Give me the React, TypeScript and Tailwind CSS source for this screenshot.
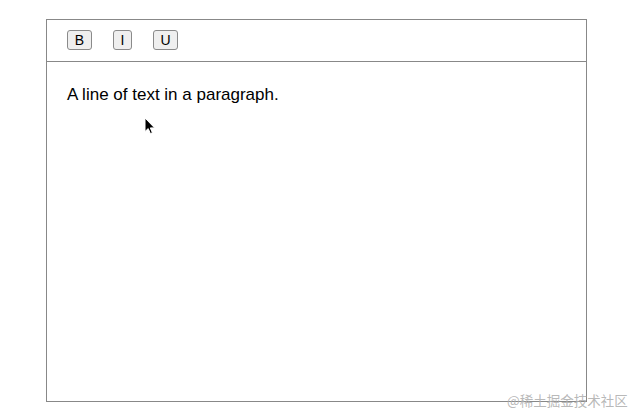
const BUTTONS = ["B", "I", "U"];

function Cursor() {
  return (
    <svg
      className="absolute left-[144px] top-[117px]"
      width="12"
      height="18"
      viewBox="0 0 12 18"
    >
      <path
        d="M1 1 L1 14.5 L4.2 11.6 L6.4 16.6 L8.4 15.7 L6.3 10.9 L10.6 10.9 Z"
        fill="#000"
        stroke="#fff"
        strokeWidth="1"
        strokeLinejoin="round"
      />
    </svg>
  );
}

export default function App() {
  return (
    <div
      className="relative h-[420px] w-[640px] bg-white pl-[46px] pt-[19px]"
      style={{ fontFamily: '"Liberation Sans", Arial, sans-serif' }}
    >
      <div className="flex h-[383px] w-[541px] flex-col border border-[#888]">
        <div className="flex items-center gap-[21px] border-b border-[#888] px-5 pt-[10px] pb-[11px]">
          {BUTTONS.map((b) => (
            <button
              key={b}
              type="button"
              className={`flex h-[20px] items-center justify-center rounded-[3px] border border-[#8a8a8a] bg-[#efefef] text-[14px] text-black ${
                b === "I" ? "w-[19px]" : "w-[25px]"
              }`}
            >
              {b}
            </button>
          ))}
        </div>
        <div className="flex-1 px-5 pt-[20px]">
          <p className="text-[17px] leading-[25px] text-black">A line of text in a paragraph.</p>
        </div>
      </div>
      <Cursor />
      <span
        className="absolute left-[507px] top-[390px] text-[13.5px] text-[#b0b0b0]/90"
        style={{ fontFamily: '"Noto Sans CJK SC", sans-serif' }}
      >
        @稀土掘金技术社区
      </span>
    </div>
  );
}
